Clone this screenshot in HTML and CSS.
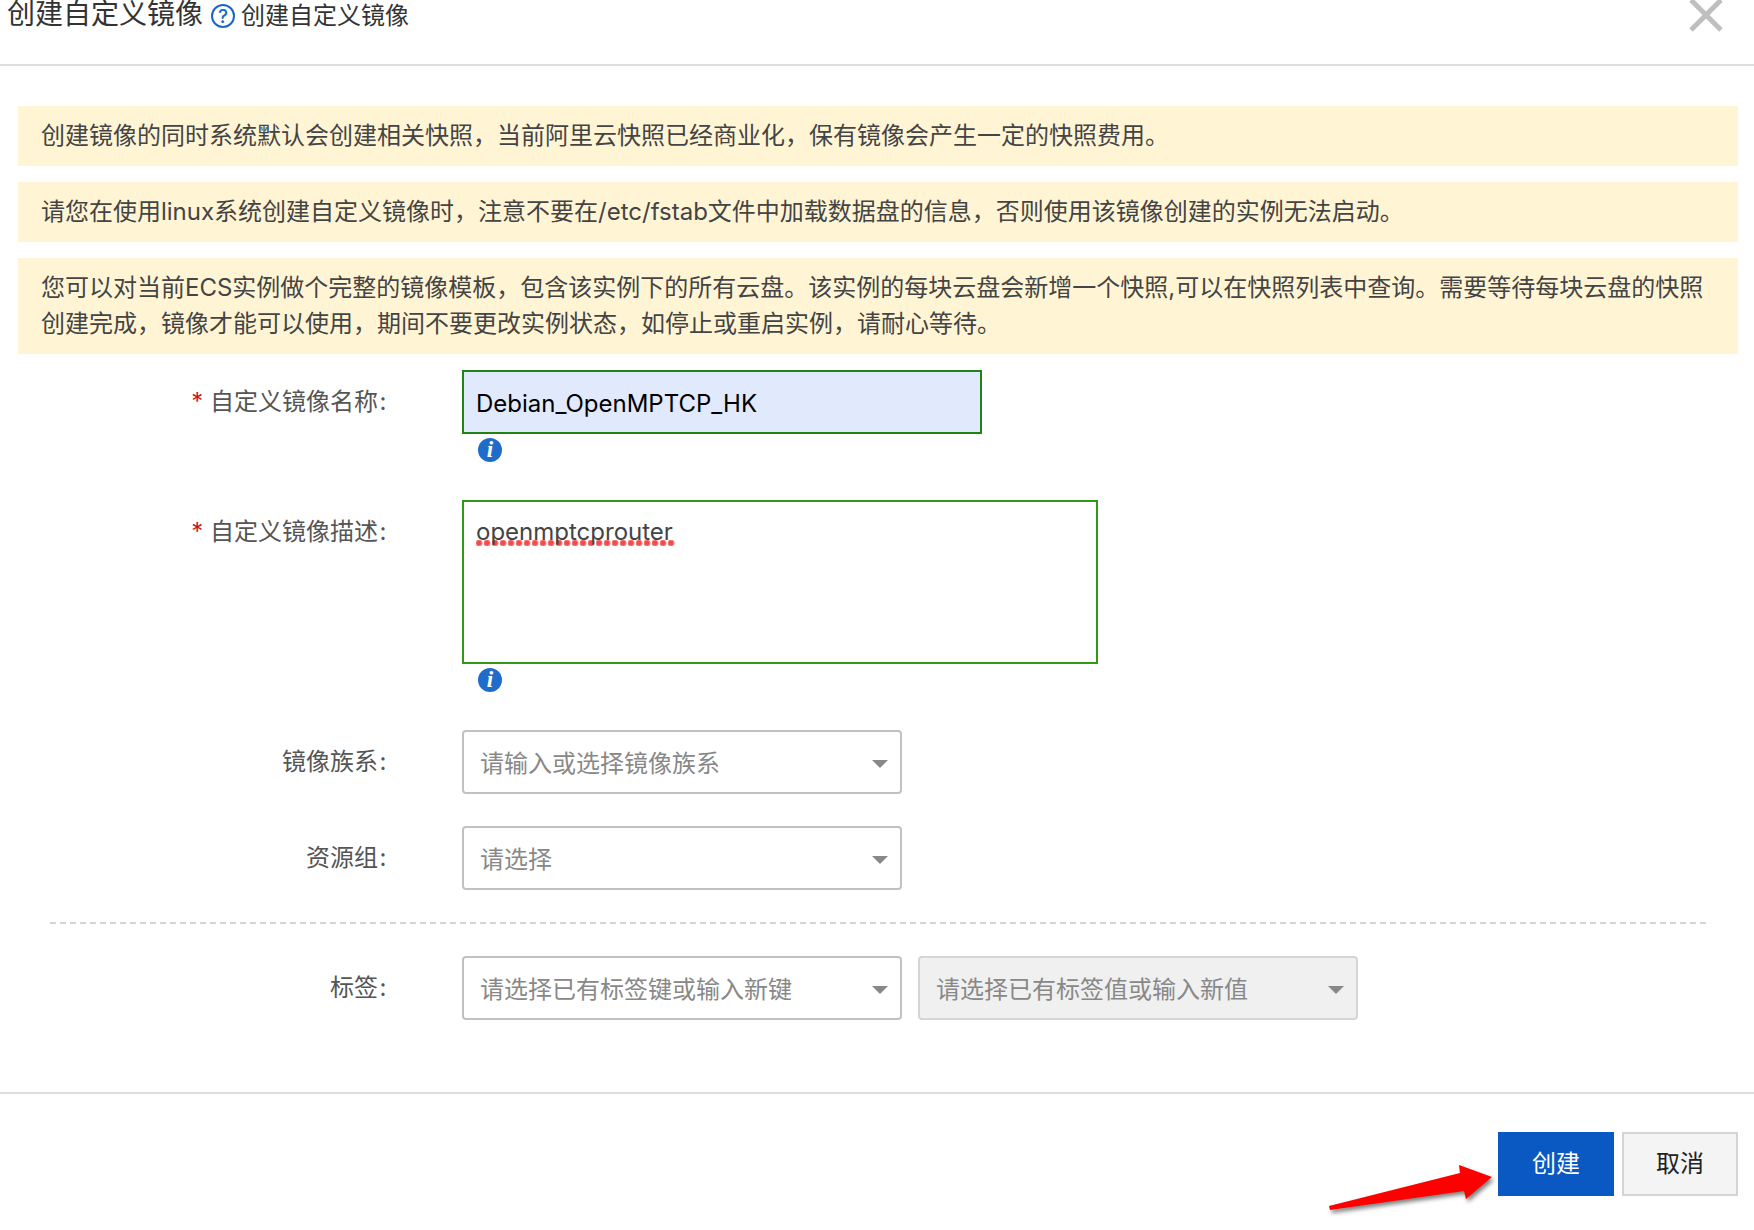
FILE: index.html
```html
<!DOCTYPE html>
<html lang="zh-CN">
  <head>
    <meta charset="utf-8" />
    <meta name="viewport" content="width=device-width, initial-scale=1" />
    <title>创建自定义镜像</title>
    <link rel="stylesheet" href="styles.css">
  </head>
  <body>
    <header class="dialog-header">
      <h1>创建自定义镜像</h1>
      <a href="#" class="help-link">
        <svg class="help-icon" viewBox="0 0 24 24" aria-hidden="true">
          <circle cx="12" cy="12" r="11" />
          <text x="12" y="19" text-anchor="middle">?</text>
        </svg>
        <span>创建自定义镜像</span>
      </a>
      <button type="button" class="close-btn" aria-label="关闭">
        <svg viewBox="0 0 34 34" aria-hidden="true">
          <path d="M2 2 32 32M32 2 2 32" />
        </svg>
      </button>
    </header>

    <form id="image-form" class="dialog-body">
      <p class="alert">创建镜像的同时系统默认会创建相关快照，当前阿里云快照已经商业化，保有镜像会产生一定的快照费用。</p>
      <p class="alert">请您在使用linux系统创建自定义镜像时，注意不要在/etc/fstab文件中加载数据盘的信息，否则使用该镜像创建的实例无法启动。</p>
      <p class="alert">您可以对当前ECS实例做个完整的镜像模板，包含该实例下的所有云盘。该实例的每块云盘会新增一个快照,可以在快照列表中查询。需要等待每块云盘的快照创建完成，镜像才能可以使用，期间不要更改实例状态，如停止或重启实例，请耐心等待。</p>

      <div class="form-row">
        <label for="image-name"><span class="required">*</span> 自定义镜像名称<span class="colon">:</span></label>
        <div class="field">
          <input type="text" id="image-name" class="text-input" value="Debian_OpenMPTCP_HK" />
          <div class="hint">
            <svg class="info-icon" viewBox="0 0 24 24" aria-hidden="true">
              <circle cx="12" cy="12" r="12" />
              <text x="12" y="19" text-anchor="middle">i</text>
            </svg>
          </div>
        </div>
      </div>

      <div class="form-row">
        <label for="image-desc"><span class="required">*</span> 自定义镜像描述<span class="colon">:</span></label>
        <div class="field">
          <div class="textarea-wrap">
            <textarea id="image-desc" spellcheck="false">openmptcprouter</textarea>
            <span class="spell-dots"></span>
          </div>
          <div class="hint">
            <svg class="info-icon" viewBox="0 0 24 24" aria-hidden="true">
              <circle cx="12" cy="12" r="12" />
              <text x="12" y="19" text-anchor="middle">i</text>
            </svg>
          </div>
        </div>
      </div>

      <div class="form-row">
        <label for="image-family">镜像族系<span class="colon">:</span></label>
        <div class="field selects">
          <div class="select-wrap">
            <select id="image-family">
              <option>请输入或选择镜像族系</option>
            </select>
          </div>
        </div>
      </div>

      <div class="form-row">
        <label for="resource-group">资源组<span class="colon">:</span></label>
        <div class="field selects">
          <div class="select-wrap">
            <select id="resource-group">
              <option>请选择</option>
            </select>
          </div>
        </div>
      </div>

      <hr class="divider" />

      <div class="form-row">
        <label for="tag-key">标签<span class="colon">:</span></label>
        <div class="field selects">
          <div class="select-wrap">
            <select id="tag-key">
              <option>请选择已有标签键或输入新键</option>
            </select>
          </div>
          <div class="select-wrap">
            <select id="tag-value" aria-label="标签值" disabled>
              <option>请选择已有标签值或输入新值</option>
            </select>
          </div>
        </div>
      </div>
    </form>

    <footer class="dialog-footer">
      <div class="submit-wrap">
        <button type="submit" form="image-form" class="btn btn-primary">创建</button>
        <svg class="arrow" viewBox="0 0 172 50" aria-hidden="true">
          <path d="M3 41 134 8 133 0 166 12 140 34 138 26 4 45Z" />
        </svg>
      </div>
      <button type="button" class="btn">取消</button>
    </footer>
  </body>
</html>
```

FILE: styles.css
```css
:root {
  --text: #333;
  --label: #555;
  --muted: #888;
  --line: #ddd;
  --blue: #0a58c1;
  --green: #2f9a18;
}

* {
  box-sizing: border-box;
}

body {
  margin: 0;
  background: #fff;
  color: var(--text);
  font-family: Inter, "Noto Sans CJK SC", sans-serif;
  font-size: 24px;
  line-height: 36px;
}

input,
textarea,
select,
button {
  font: inherit;
}

.dialog-header {
  display: flex;
  align-items: flex-start;
  gap: 8px;
  height: 66px;
  padding: 0 31px 0 7px;
  border-bottom: 2px solid var(--line);
}
.dialog-header h1 {
  margin: 0;
  font-size: 28px;
  font-weight: 400;
  line-height: 28px;
}
.help-link {
  display: flex;
  align-items: center;
  gap: 6px;
  line-height: 32px;
  color: var(--text);
  text-decoration: none;
}
.help-icon {
  width: 24px;
  height: 24px;
}
.help-icon circle {
  fill: none;
  stroke: #1a66c8;
  stroke-width: 2;
}
.help-icon text {
  fill: #1a66c8;
  font-size: 19px;
  font-weight: 500;
}

.close-btn {
  margin: -2px 0 0 auto;
  padding: 0;
  border: 0;
  background: none;
  line-height: 0;
  cursor: pointer;
}
.close-btn svg {
  width: 34px;
  height: 34px;
}
.close-btn path {
  stroke: #bfbfbf;
  stroke-width: 5;
}

.dialog-body {
  padding: 40px 16px 72px 18px;
}

.alert {
  margin: 0 0 16px;
  padding: 12px 23px;
  background: #fff5d5;
  color: #444;
}

.form-row {
  display: grid;
  grid-template-columns: 370px 1fr;
  column-gap: 74px;
  margin-top: 32px;
}
.alert + .form-row {
  margin-top: 0;
}
.form-row label {
  color: var(--label);
  line-height: 64px;
  text-align: right;
}
.required {
  color: #c8191e;
}
.colon {
  display: inline-block;
  width: 10px;
  text-align: center;
}

.text-input {
  display: block;
  width: 520px;
  max-width: 100%;
  height: 64px;
  padding: 2px 12px 0;
  border: 2px solid #1f8413;
  background: #e1e9fc;
  color: #000;
}

.textarea-wrap {
  position: relative;
  width: 636px;
  max-width: 100%;
  height: 164px;
}
.textarea-wrap textarea {
  position: relative;
  z-index: 1;
  display: block;
  width: 100%;
  height: 100%;
  padding: 12px;
  border: 2px solid var(--green);
  background: transparent;
  color: #444;
  resize: none;
}
/* spell checker underline */
.spell-dots {
  position: absolute;
  top: 40px;
  left: 14px;
  width: 200px;
  height: 6px;
  background: radial-gradient(circle at 3px 3px, #f04c4c 2px, #f88 3px, transparent 4px);
  background-size: 8px 6px;
}

.hint {
  height: 34px;
  padding: 4px 16px;
  line-height: 0;
}
.info-icon {
  width: 24px;
  height: 24px;
}
.info-icon circle {
  fill: #1f6ccb;
}
.info-icon text {
  fill: #fff;
  font: italic bold 23px "Liberation Serif", serif;
}

.selects {
  display: flex;
  flex-wrap: wrap;
  gap: 16px;
}
.select-wrap {
  position: relative;
  width: 440px;
}
.select-wrap::after {
  content: "";
  position: absolute;
  top: 30px;
  right: 14px;
  border: 8px solid transparent;
  border-top-color: var(--muted);
  border-bottom: 0;
  pointer-events: none;
}
.select-wrap select {
  display: block;
  width: 100%;
  height: 64px;
  padding: 4px 40px 0 16px;
  border: 2px solid #c1c1c1;
  border-radius: 4px;
  background: #fff;
  color: var(--muted);
  appearance: none;
}
.select-wrap select:disabled {
  border-color: #d5d5d5;
  background: #f0f0f0;
  opacity: 1;
}

.divider {
  margin: 32px 32px 0;
  border: 0;
  border-top: 2px dashed #d5d5d5;
}

.dialog-footer {
  display: flex;
  justify-content: flex-end;
  gap: 8px;
  padding: 38px 16px 34px;
  border-top: 2px solid var(--line);
}
.btn {
  width: 116px;
  height: 64px;
  padding: 0;
  border: 2px solid #d5d5d5;
  background: #f4f4f4;
  color: #222;
  cursor: pointer;
}
.btn-primary {
  border-color: var(--blue);
  background: var(--blue);
  color: #fff;
}

.submit-wrap {
  position: relative;
}
.arrow {
  position: absolute;
  top: 33px;
  right: 116px;
  width: 172px;
  height: 50px;
  overflow: visible;
  filter: drop-shadow(2px 3px 2px rgba(0, 0, 0, 0.5));
  pointer-events: none;
}
.arrow path {
  fill: #fe0000;
}
```
